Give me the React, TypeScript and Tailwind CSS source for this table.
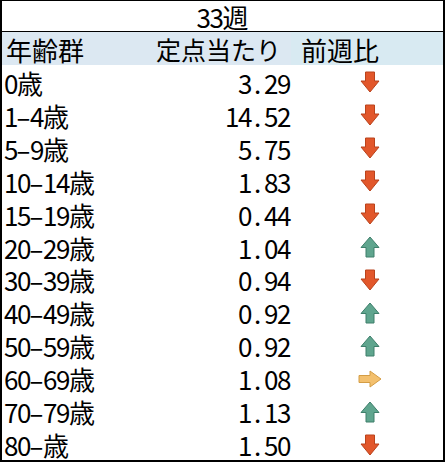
import React from "react";

const rows: { label: string; value: string; dir: "up" | "down" | "right" }[] = [
  { label: "0歳", value: "3.29", dir: "down" },
  { label: "1-4歳", value: "14.52", dir: "down" },
  { label: "5-9歳", value: "5.75", dir: "down" },
  { label: "10-14歳", value: "1.83", dir: "down" },
  { label: "15-19歳", value: "0.44", dir: "down" },
  { label: "20-29歳", value: "1.04", dir: "up" },
  { label: "30-39歳", value: "0.94", dir: "down" },
  { label: "40-49歳", value: "0.92", dir: "up" },
  { label: "50-59歳", value: "0.92", dir: "up" },
  { label: "60-69歳", value: "1.08", dir: "right" },
  { label: "70-79歳", value: "1.13", dir: "up" },
  { label: "80-歳", value: "1.50", dir: "down" },
];

function T({ s }: { s: string }) {
  return (
    <>
      {s.split("").map((c, i) =>
        c === "-" ? (
          <span key={i} className="inline-block w-[0.5em] text-center">
            <span className="inline-block scale-x-[1.7]">{c}</span>
          </span>
        ) : /[\x20-\x7e]/.test(c) ? (
          <span key={i} className="inline-block w-[0.5em] text-center">
            {c}
          </span>
        ) : (
          <span key={i}>{c}</span>
        )
      )}
    </>
  );
}

function Arrow({ dir }: { dir: "up" | "down" | "right" }) {
  if (dir === "down") {
    return (
      <svg width="20" height="22" viewBox="0 0 20 22">
        <path
          d="M5.5 1 H14.5 V10 H19 L10 21 L1 10 H5.5 Z"
          fill="#E2572B"
          stroke="#B9431C"
          strokeWidth="1"
          strokeLinejoin="round"
        />
      </svg>
    );
  }
  if (dir === "up") {
    return (
      <svg width="20" height="22" viewBox="0 0 20 22">
        <path
          d="M6 21 H14 V11.5 H19 L10 1 L1 11.5 H6 Z"
          fill="#5FA58E"
          stroke="#3E7F6B"
          strokeWidth="1"
          strokeLinejoin="round"
        />
      </svg>
    );
  }
  return (
    <svg width="24" height="18" viewBox="0 0 24 18">
      <path
        d="M1 5.5 H12 V1 L23 9 L12 17 V12.5 H1 Z"
        fill="#F3C06E"
        stroke="#D49D45"
        strokeWidth="1"
        strokeLinejoin="round"
      />
    </svg>
  );
}

export default function App() {
  return (
    <div className="w-[447px] h-[463px] bg-white">
      <div
        className="w-[445px] h-[462px] flex flex-col border-t border-l-2 border-r-2 border-b-2 border-black text-black text-[26px] leading-none whitespace-nowrap"
        style={{ fontFamily: '"Noto Sans CJK JP", "Noto Sans", sans-serif' }}
      >
        <div className="h-[31px] border-b border-black flex items-center justify-center">
          <span className="pt-[2px]">
            <T s="33週" />
          </span>
        </div>
        <div className="h-[33px] grid grid-cols-[148px_141px_1fr] items-stretch">
          <div className="bg-[#DCE8F2] flex items-center pl-[4px] pt-[2px]">年齢群</div>
          <div className="bg-[#DCE8F2] flex items-center justify-end pr-[10px] pt-[2px] overflow-visible">
            <span className="text-[25px]">定点当たり</span>
          </div>
          <div className="bg-[#D8EAF2] flex items-center pl-[10px] pt-[2px]">前週比</div>
        </div>
        <div className="flex-1 grid grid-rows-12">
          {rows.map((r) => (
            <div key={r.label} className="grid grid-cols-[148px_141px_1fr] items-center">
              <div className="pl-[2px] pt-[3px]">
                <T s={r.label} />
              </div>
              <div className="text-right pr-[1px] pt-[3px]">
                <T s={r.value} />
              </div>
              <div className="flex justify-center pl-[6px] pt-[2px]">
                <Arrow dir={r.dir} />
              </div>
            </div>
          ))}
        </div>
      </div>
    </div>
  );
}
